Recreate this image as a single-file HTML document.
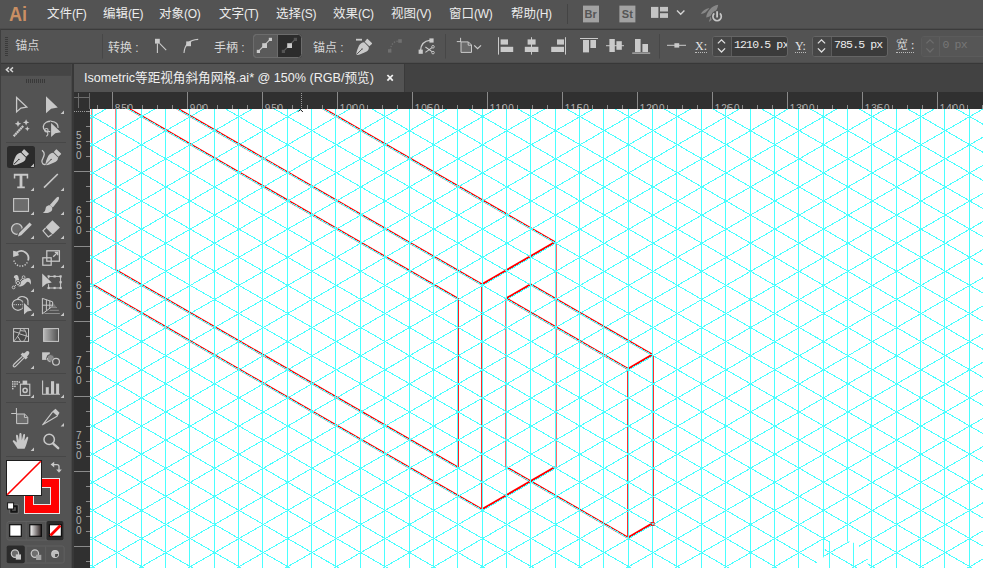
<!DOCTYPE html>
<html lang="zh-CN"><head><meta charset="utf-8"><title>Adobe Illustrator - Isometric等距视角斜角网格.ai</title>
<style>
html,body{margin:0;padding:0;}
body{width:983px;height:568px;overflow:hidden;background:#535353;position:relative;font-family:"Liberation Sans","Noto Sans CJK SC",sans-serif;color:#e6e6e6;}
.abs{position:absolute;}
#menubar{left:0;top:0;width:983px;height:28px;background:#535353;}
#menubar span{position:absolute;top:5px;font-size:12.5px;line-height:18px;color:#ececec;white-space:nowrap;}
#menubar i{font-style:normal;font-size:12px;letter-spacing:-0.3px;}
#ailogo{position:absolute;left:9px;top:0px;font-size:21px;line-height:27px;font-weight:bold;color:#c98f63;transform:scaleX(0.86);transform-origin:0 0;}
#line1{left:0;top:28px;width:983px;height:2px;background:linear-gradient(#4b4b4b 0 50%,#3b3b3b 50% 100%);}
#ctrl{left:1px;top:30px;width:982px;height:32px;background:#535353;}
#ctrl span{position:absolute;font-size:12px;line-height:16px;color:#d6d6d6;white-space:nowrap;}
#line2{left:0;top:62px;width:983px;height:2px;background:linear-gradient(#4d4d4d 0 40%,#383838 40% 100%);}
#leftedge{left:0;top:29px;width:1px;height:539px;background:#3f3f3f;}
#tools{left:1px;top:64px;width:70px;height:504px;background:#535353;}
#toolhead{left:1px;top:64px;width:70px;height:11px;background:#454545;}
#toolheadline{left:1px;top:75px;width:70px;height:1px;background:#474747;}
#gap{left:71px;top:64px;width:3px;height:504px;background:#383838;border-left:1.5px solid #494949;box-sizing:border-box;}
#tabbar{left:74px;top:64px;width:909px;height:28px;background:#424242;}
#tab{left:74px;top:64px;width:330px;height:28px;background:#535353;border-right:1px solid #3a3a3a;}
#tab span{position:absolute;left:10px;top:5px;font-size:12.6px;line-height:18px;color:#f0f0f0;white-space:nowrap;}
#rulert{left:74px;top:92px;width:909px;height:17px;background:#303030;}
#rulerl{left:74px;top:109px;width:16px;height:459px;background:#303030;}
#canvas{left:90px;top:109px;width:893px;height:459px;background:#fff;overflow:hidden;}
svg.cv{position:absolute;left:0;top:0;display:block;}
svg.rul{position:absolute;left:0;top:0;display:block;}
svg.ui{position:absolute;left:0;top:0;display:block;}
.field{position:absolute;top:35.5px;height:21px;box-sizing:border-box;border:1px solid #656565;border-radius:3px;background:#3b3b3b;overflow:hidden;}
.field .sp{position:absolute;left:0;top:0;width:17.5px;height:19px;background:#464646;border-right:1px solid #5c5c5c;}
.field .tx{position:absolute;left:21px;top:0.5px;font-family:"Liberation Mono",monospace;font-size:11.5px;line-height:15px;letter-spacing:-0.85px;color:#ececec;white-space:pre;}
.lbl{font-family:"Liberation Serif","Noto Serif CJK SC",serif;}
</style></head><body>
<div id="menubar" class="abs">
<div id="ailogo">Ai</div>
<span style="left:47px">文件<i>(F)</i></span><span style="left:103px">编辑<i>(E)</i></span><span style="left:159px">对象<i>(O)</i></span><span style="left:219px">文字<i>(T)</i></span><span style="left:276px">选择<i>(S)</i></span><span style="left:333px">效果<i>(C)</i></span><span style="left:391px">视图<i>(V)</i></span><span style="left:449px">窗口<i>(W)</i></span><span style="left:511px">帮助<i>(H)</i></span>
</div>
<div id="line1" class="abs"></div>
<div id="ctrl" class="abs"></div>
<div id="line2" class="abs"></div>
<div id="tools" class="abs"></div>
<div id="toolhead" class="abs"></div>
<div id="toolheadline" class="abs"></div>
<div id="gap" class="abs"></div>
<div id="leftedge" class="abs"></div>
<div id="tabbar" class="abs"></div>
<div id="tab" class="abs"><span>Isometric等距视角斜角网格.ai* @ 150% (RGB/预览)</span></div>
<div id="rulert" class="abs"></div>
<div id="rulerl" class="abs"></div>
<svg class="rul" width="983" height="568" viewBox="0 0 983 568">
<g stroke="#8a8a8a" stroke-width="1" shape-rendering="crispEdges">
<g stroke="#6c6c6c"><line x1="78.5" y1="93" x2="78.5" y2="108"/><line x1="74" y1="97.5" x2="90" y2="97.5"/><line x1="89.5" y1="93" x2="89.5" y2="109"/></g>
<line x1="97.5" y1="105" x2="97.5" y2="109"/>
<line x1="112.5" y1="92" x2="112.5" y2="109"/>
<line x1="127.5" y1="105" x2="127.5" y2="109"/>
<line x1="142.5" y1="105" x2="142.5" y2="109"/>
<line x1="157.5" y1="105" x2="157.5" y2="109"/>
<line x1="172.5" y1="105" x2="172.5" y2="109"/>
<line x1="187.5" y1="92" x2="187.5" y2="109"/>
<line x1="202.5" y1="105" x2="202.5" y2="109"/>
<line x1="217.5" y1="105" x2="217.5" y2="109"/>
<line x1="232.5" y1="105" x2="232.5" y2="109"/>
<line x1="247.5" y1="105" x2="247.5" y2="109"/>
<line x1="262.5" y1="92" x2="262.5" y2="109"/>
<line x1="277.5" y1="105" x2="277.5" y2="109"/>
<line x1="292.5" y1="105" x2="292.5" y2="109"/>
<line x1="307.5" y1="105" x2="307.5" y2="109"/>
<line x1="322.5" y1="105" x2="322.5" y2="109"/>
<line x1="337.5" y1="92" x2="337.5" y2="109"/>
<line x1="352.5" y1="105" x2="352.5" y2="109"/>
<line x1="367.5" y1="105" x2="367.5" y2="109"/>
<line x1="382.5" y1="105" x2="382.5" y2="109"/>
<line x1="397.5" y1="105" x2="397.5" y2="109"/>
<line x1="412.5" y1="92" x2="412.5" y2="109"/>
<line x1="427.5" y1="105" x2="427.5" y2="109"/>
<line x1="442.5" y1="105" x2="442.5" y2="109"/>
<line x1="457.5" y1="105" x2="457.5" y2="109"/>
<line x1="472.5" y1="105" x2="472.5" y2="109"/>
<line x1="487.5" y1="92" x2="487.5" y2="109"/>
<line x1="502.5" y1="105" x2="502.5" y2="109"/>
<line x1="517.5" y1="105" x2="517.5" y2="109"/>
<line x1="532.5" y1="105" x2="532.5" y2="109"/>
<line x1="547.5" y1="105" x2="547.5" y2="109"/>
<line x1="562.5" y1="92" x2="562.5" y2="109"/>
<line x1="577.5" y1="105" x2="577.5" y2="109"/>
<line x1="592.5" y1="105" x2="592.5" y2="109"/>
<line x1="607.5" y1="105" x2="607.5" y2="109"/>
<line x1="622.5" y1="105" x2="622.5" y2="109"/>
<line x1="637.5" y1="92" x2="637.5" y2="109"/>
<line x1="652.5" y1="105" x2="652.5" y2="109"/>
<line x1="667.5" y1="105" x2="667.5" y2="109"/>
<line x1="682.5" y1="105" x2="682.5" y2="109"/>
<line x1="697.5" y1="105" x2="697.5" y2="109"/>
<line x1="712.5" y1="92" x2="712.5" y2="109"/>
<line x1="727.5" y1="105" x2="727.5" y2="109"/>
<line x1="742.5" y1="105" x2="742.5" y2="109"/>
<line x1="757.5" y1="105" x2="757.5" y2="109"/>
<line x1="772.5" y1="105" x2="772.5" y2="109"/>
<line x1="787.5" y1="92" x2="787.5" y2="109"/>
<line x1="802.5" y1="105" x2="802.5" y2="109"/>
<line x1="817.5" y1="105" x2="817.5" y2="109"/>
<line x1="832.5" y1="105" x2="832.5" y2="109"/>
<line x1="847.5" y1="105" x2="847.5" y2="109"/>
<line x1="862.5" y1="92" x2="862.5" y2="109"/>
<line x1="877.5" y1="105" x2="877.5" y2="109"/>
<line x1="892.5" y1="105" x2="892.5" y2="109"/>
<line x1="907.5" y1="105" x2="907.5" y2="109"/>
<line x1="922.5" y1="105" x2="922.5" y2="109"/>
<line x1="937.5" y1="92" x2="937.5" y2="109"/>
<line x1="952.5" y1="105" x2="952.5" y2="109"/>
<line x1="967.5" y1="105" x2="967.5" y2="109"/>
<line x1="982.5" y1="105" x2="982.5" y2="109"/>
<line x1="86" y1="111.5" x2="90" y2="111.5"/>
<line x1="86" y1="126.5" x2="90" y2="126.5"/>
<line x1="86" y1="141.5" x2="90" y2="141.5"/>
<line x1="86" y1="156.5" x2="90" y2="156.5"/>
<line x1="74" y1="171.5" x2="90" y2="171.5"/>
<line x1="86" y1="186.5" x2="90" y2="186.5"/>
<line x1="86" y1="201.5" x2="90" y2="201.5"/>
<line x1="86" y1="216.5" x2="90" y2="216.5"/>
<line x1="86" y1="231.5" x2="90" y2="231.5"/>
<line x1="74" y1="246.5" x2="90" y2="246.5"/>
<line x1="86" y1="261.5" x2="90" y2="261.5"/>
<line x1="86" y1="276.5" x2="90" y2="276.5"/>
<line x1="86" y1="291.5" x2="90" y2="291.5"/>
<line x1="86" y1="306.5" x2="90" y2="306.5"/>
<line x1="74" y1="321.5" x2="90" y2="321.5"/>
<line x1="86" y1="336.5" x2="90" y2="336.5"/>
<line x1="86" y1="351.5" x2="90" y2="351.5"/>
<line x1="86" y1="366.5" x2="90" y2="366.5"/>
<line x1="86" y1="381.5" x2="90" y2="381.5"/>
<line x1="74" y1="396.5" x2="90" y2="396.5"/>
<line x1="86" y1="411.5" x2="90" y2="411.5"/>
<line x1="86" y1="426.5" x2="90" y2="426.5"/>
<line x1="86" y1="441.5" x2="90" y2="441.5"/>
<line x1="86" y1="456.5" x2="90" y2="456.5"/>
<line x1="74" y1="471.5" x2="90" y2="471.5"/>
<line x1="86" y1="486.5" x2="90" y2="486.5"/>
<line x1="86" y1="501.5" x2="90" y2="501.5"/>
<line x1="86" y1="516.5" x2="90" y2="516.5"/>
<line x1="86" y1="531.5" x2="90" y2="531.5"/>
<line x1="74" y1="546.5" x2="90" y2="546.5"/>
<line x1="86" y1="561.5" x2="90" y2="561.5"/>
</g>
<line x1="74" y1="111.5" x2="90" y2="111.5" stroke="#9a9a9a" stroke-width="1" stroke-dasharray="1 1" shape-rendering="crispEdges"/>
<line x1="301.5" y1="93" x2="301.5" y2="109" stroke="#9a9a9a" stroke-width="1" stroke-dasharray="1 1" shape-rendering="crispEdges"/>
<g font-family="Liberation Sans, sans-serif" font-size="10" fill="#b2b2b2">
<text x="114.8" y="112.3" letter-spacing="0.85">850</text>
<text x="189.8" y="112.3" letter-spacing="0.85">900</text>
<text x="264.8" y="112.3" letter-spacing="0.85">950</text>
<text x="339.8" y="112.3" letter-spacing="0.85">1000</text>
<text x="414.8" y="112.3" letter-spacing="0.85">1050</text>
<text x="489.8" y="112.3" letter-spacing="0.85">1100</text>
<text x="564.8" y="112.3" letter-spacing="0.85">1150</text>
<text x="639.8" y="112.3" letter-spacing="0.85">1200</text>
<text x="714.8" y="112.3" letter-spacing="0.85">1250</text>
<text x="789.8" y="112.3" letter-spacing="0.85">1300</text>
<text x="864.8" y="112.3" letter-spacing="0.85">1350</text>
<text x="939.8" y="112.3" letter-spacing="0.85">1400</text>
<text x="76" y="138.7">5</text>
<text x="76" y="148.7">5</text>
<text x="76" y="158.7">0</text>
<text x="76" y="213.7">6</text>
<text x="76" y="223.7">0</text>
<text x="76" y="233.7">0</text>
<text x="76" y="288.7">6</text>
<text x="76" y="298.7">5</text>
<text x="76" y="308.7">0</text>
<text x="76" y="363.7">7</text>
<text x="76" y="373.7">0</text>
<text x="76" y="383.7">0</text>
<text x="76" y="438.7">7</text>
<text x="76" y="448.7">5</text>
<text x="76" y="458.7">0</text>
<text x="76" y="513.7">8</text>
<text x="76" y="523.7">0</text>
<text x="76" y="533.7">0</text>
<text x="76" y="588.7">8</text>
<text x="76" y="598.7">5</text>
<text x="76" y="608.7">0</text>
</g>
</svg>
<div id="canvas" class="abs">
<svg class="cv" width="893" height="459" viewBox="90 109 893 459">
<g stroke="#ff0000" stroke-width="2" fill="none">
<line x1="481.80" y1="284.37" x2="554.88" y2="242.18"/>
<line x1="554.88" y1="467.21" x2="481.80" y2="509.40"/>
<line x1="481.80" y1="284.37" x2="140.76" y2="87.47"/>
<line x1="554.88" y1="242.18" x2="213.84" y2="45.28"/>
<line x1="457.44" y1="298.44" x2="116.40" y2="101.54"/>
<line x1="457.44" y1="467.21" x2="116.40" y2="270.31"/>
<line x1="481.80" y1="509.40" x2="92.04" y2="284.37"/>
<line x1="506.16" y1="298.44" x2="530.52" y2="284.37"/>
<line x1="530.52" y1="284.37" x2="652.32" y2="354.69"/>
<line x1="652.32" y1="354.69" x2="627.96" y2="368.76"/>
<line x1="627.96" y1="368.76" x2="506.16" y2="298.44"/>
<line x1="506.16" y1="467.21" x2="627.96" y2="537.53"/>
<line x1="627.96" y1="537.53" x2="652.32" y2="523.46"/>
</g>
<g stroke-width="1" fill="none" shape-rendering="crispEdges">
<line x1="556.5" y1="242.18" x2="556.5" y2="467.21" stroke="#ff6a6a"/>
<line x1="481.5" y1="509.40" x2="481.5" y2="284.37" stroke="#ff2a2a"/>
<line x1="458.5" y1="298.44" x2="458.5" y2="467.21" stroke="#ff2020"/>
<line x1="115.5" y1="270.31" x2="115.5" y2="73.41" stroke="#ff7a7a"/>
<line x1="91.5" y1="284.37" x2="91.5" y2="73.41" stroke="#ff7a7a"/>
<line x1="505.5" y1="298.44" x2="505.5" y2="467.21" stroke="#ff6a6a"/>
<line x1="627.5" y1="368.76" x2="627.5" y2="537.53" stroke="#ff3030"/>
<line x1="653.5" y1="354.69" x2="653.5" y2="523.46" stroke="#ff3030"/>
</g>
<g stroke="#4affff" stroke-width="1" shape-rendering="crispEdges" fill="none">
<line x1="92.5" y1="109" x2="92.5" y2="568"/>
<line x1="116.5" y1="109" x2="116.5" y2="568"/>
<line x1="141.5" y1="109" x2="141.5" y2="568"/>
<line x1="165.5" y1="109" x2="165.5" y2="568"/>
<line x1="189.5" y1="109" x2="189.5" y2="568"/>
<line x1="214.5" y1="109" x2="214.5" y2="568"/>
<line x1="238.5" y1="109" x2="238.5" y2="568"/>
<line x1="262.5" y1="109" x2="262.5" y2="568"/>
<line x1="287.5" y1="109" x2="287.5" y2="568"/>
<line x1="311.5" y1="109" x2="311.5" y2="568"/>
<line x1="335.5" y1="109" x2="335.5" y2="568"/>
<line x1="360.5" y1="109" x2="360.5" y2="568"/>
<line x1="384.5" y1="109" x2="384.5" y2="568"/>
<line x1="409.5" y1="109" x2="409.5" y2="568"/>
<line x1="433.5" y1="109" x2="433.5" y2="568"/>
<line x1="457.5" y1="109" x2="457.5" y2="568"/>
<line x1="482.5" y1="109" x2="482.5" y2="568"/>
<line x1="506.5" y1="109" x2="506.5" y2="568"/>
<line x1="530.5" y1="109" x2="530.5" y2="568"/>
<line x1="555.5" y1="109" x2="555.5" y2="568"/>
<line x1="579.5" y1="109" x2="579.5" y2="568"/>
<line x1="603.5" y1="109" x2="603.5" y2="568"/>
<line x1="628.5" y1="109" x2="628.5" y2="568"/>
<line x1="652.5" y1="109" x2="652.5" y2="568"/>
<line x1="676.5" y1="109" x2="676.5" y2="568"/>
<line x1="701.5" y1="109" x2="701.5" y2="568"/>
<line x1="725.5" y1="109" x2="725.5" y2="568"/>
<line x1="750.5" y1="109" x2="750.5" y2="568"/>
<line x1="774.5" y1="109" x2="774.5" y2="568"/>
<line x1="798.5" y1="109" x2="798.5" y2="568"/>
<line x1="823.5" y1="109" x2="823.5" y2="568"/>
<line x1="847.5" y1="109" x2="847.5" y2="568"/>
<line x1="871.5" y1="109" x2="871.5" y2="568"/>
<line x1="896.5" y1="109" x2="896.5" y2="568"/>
<line x1="920.5" y1="109" x2="920.5" y2="568"/>
<line x1="944.5" y1="109" x2="944.5" y2="568"/>
<line x1="969.5" y1="109" x2="969.5" y2="568"/>
<line x1="90" y1="-391.353" x2="983" y2="124.221"/>
<line x1="90" y1="-363.224" x2="983" y2="152.350"/>
<line x1="90" y1="-335.096" x2="983" y2="180.478"/>
<line x1="90" y1="-306.967" x2="983" y2="208.607"/>
<line x1="90" y1="-278.839" x2="983" y2="236.735"/>
<line x1="90" y1="-250.710" x2="983" y2="264.864"/>
<line x1="90" y1="-222.582" x2="983" y2="292.992"/>
<line x1="90" y1="-194.453" x2="983" y2="321.121"/>
<line x1="90" y1="-166.325" x2="983" y2="349.249"/>
<line x1="90" y1="-138.196" x2="983" y2="377.378"/>
<line x1="90" y1="-110.068" x2="983" y2="405.506"/>
<line x1="90" y1="-81.939" x2="983" y2="433.635"/>
<line x1="90" y1="-53.811" x2="983" y2="461.763"/>
<line x1="90" y1="-25.682" x2="983" y2="489.892"/>
<line x1="90" y1="2.446" x2="983" y2="518.020"/>
<line x1="90" y1="30.575" x2="983" y2="546.149"/>
<line x1="90" y1="58.703" x2="983" y2="574.277"/>
<line x1="90" y1="86.832" x2="983" y2="602.406"/>
<line x1="90" y1="114.960" x2="983" y2="630.534"/>
<line x1="90" y1="118.240" x2="983" y2="-397.334"/>
<line x1="90" y1="143.089" x2="983" y2="658.663"/>
<line x1="90" y1="146.368" x2="983" y2="-369.206"/>
<line x1="90" y1="171.217" x2="983" y2="686.791"/>
<line x1="90" y1="174.497" x2="983" y2="-341.077"/>
<line x1="90" y1="199.346" x2="983" y2="714.920"/>
<line x1="90" y1="202.625" x2="983" y2="-312.949"/>
<line x1="90" y1="227.474" x2="983" y2="743.048"/>
<line x1="90" y1="230.754" x2="983" y2="-284.820"/>
<line x1="90" y1="255.603" x2="983" y2="771.177"/>
<line x1="90" y1="258.882" x2="983" y2="-256.692"/>
<line x1="90" y1="283.731" x2="983" y2="799.305"/>
<line x1="90" y1="287.011" x2="983" y2="-228.563"/>
<line x1="90" y1="311.860" x2="983" y2="827.434"/>
<line x1="90" y1="315.139" x2="983" y2="-200.435"/>
<line x1="90" y1="339.988" x2="983" y2="855.562"/>
<line x1="90" y1="343.268" x2="983" y2="-172.306"/>
<line x1="90" y1="368.117" x2="983" y2="883.691"/>
<line x1="90" y1="371.396" x2="983" y2="-144.178"/>
<line x1="90" y1="396.245" x2="983" y2="911.819"/>
<line x1="90" y1="399.525" x2="983" y2="-116.049"/>
<line x1="90" y1="424.374" x2="983" y2="939.948"/>
<line x1="90" y1="427.653" x2="983" y2="-87.921"/>
<line x1="90" y1="452.502" x2="983" y2="968.076"/>
<line x1="90" y1="455.782" x2="983" y2="-59.792"/>
<line x1="90" y1="480.631" x2="983" y2="996.205"/>
<line x1="90" y1="483.910" x2="983" y2="-31.664"/>
<line x1="90" y1="508.759" x2="983" y2="1024.333"/>
<line x1="90" y1="512.039" x2="983" y2="-3.535"/>
<line x1="90" y1="536.888" x2="983" y2="1052.462"/>
<line x1="90" y1="540.167" x2="983" y2="24.593"/>
<line x1="90" y1="565.016" x2="983" y2="1080.590"/>
<line x1="90" y1="568.296" x2="983" y2="52.722"/>
<line x1="90" y1="596.424" x2="983" y2="80.850"/>
<line x1="90" y1="624.553" x2="983" y2="108.979"/>
<line x1="90" y1="652.681" x2="983" y2="137.107"/>
<line x1="90" y1="680.810" x2="983" y2="165.236"/>
<line x1="90" y1="708.938" x2="983" y2="193.364"/>
<line x1="90" y1="737.067" x2="983" y2="221.493"/>
<line x1="90" y1="765.195" x2="983" y2="249.622"/>
<line x1="90" y1="793.324" x2="983" y2="277.750"/>
<line x1="90" y1="821.452" x2="983" y2="305.879"/>
<line x1="90" y1="849.581" x2="983" y2="334.007"/>
<line x1="90" y1="877.709" x2="983" y2="362.136"/>
<line x1="90" y1="905.838" x2="983" y2="390.264"/>
<line x1="90" y1="933.966" x2="983" y2="418.393"/>
<line x1="90" y1="962.095" x2="983" y2="446.521"/>
<line x1="90" y1="990.223" x2="983" y2="474.650"/>
<line x1="90" y1="1018.352" x2="983" y2="502.778"/>
<line x1="90" y1="1046.480" x2="983" y2="530.907"/>
<line x1="90" y1="1074.609" x2="983" y2="559.035"/>
</g>
<rect x="651.1" y="522.5" width="3" height="3" fill="none" stroke="#e81818" stroke-width="0.9"/>
<path d="M298.3,111.6 L300.3,109.6 L302.9,111.8" fill="none" stroke="#111" stroke-width="1"/>
<clipPath id="wm"><path d="M825,548 L829,542 L851,541.5 L858,545 L868,558 L867,568 L817,568 L817,562 L824,557Z"/></clipPath>
<g clip-path="url(#wm)"><rect x="810" y="535" width="70" height="40" fill="#fff"/><g transform="translate(-17.9,0)"><g stroke="#4affff" stroke-width="1" shape-rendering="crispEdges" fill="none"><line x1="92.5" y1="109" x2="92.5" y2="568"/><line x1="116.5" y1="109" x2="116.5" y2="568"/><line x1="141.5" y1="109" x2="141.5" y2="568"/><line x1="165.5" y1="109" x2="165.5" y2="568"/><line x1="189.5" y1="109" x2="189.5" y2="568"/><line x1="214.5" y1="109" x2="214.5" y2="568"/><line x1="238.5" y1="109" x2="238.5" y2="568"/><line x1="262.5" y1="109" x2="262.5" y2="568"/><line x1="287.5" y1="109" x2="287.5" y2="568"/><line x1="311.5" y1="109" x2="311.5" y2="568"/><line x1="335.5" y1="109" x2="335.5" y2="568"/><line x1="360.5" y1="109" x2="360.5" y2="568"/><line x1="384.5" y1="109" x2="384.5" y2="568"/><line x1="409.5" y1="109" x2="409.5" y2="568"/><line x1="433.5" y1="109" x2="433.5" y2="568"/><line x1="457.5" y1="109" x2="457.5" y2="568"/><line x1="482.5" y1="109" x2="482.5" y2="568"/><line x1="506.5" y1="109" x2="506.5" y2="568"/><line x1="530.5" y1="109" x2="530.5" y2="568"/><line x1="555.5" y1="109" x2="555.5" y2="568"/><line x1="579.5" y1="109" x2="579.5" y2="568"/><line x1="603.5" y1="109" x2="603.5" y2="568"/><line x1="628.5" y1="109" x2="628.5" y2="568"/><line x1="652.5" y1="109" x2="652.5" y2="568"/><line x1="676.5" y1="109" x2="676.5" y2="568"/><line x1="701.5" y1="109" x2="701.5" y2="568"/><line x1="725.5" y1="109" x2="725.5" y2="568"/><line x1="750.5" y1="109" x2="750.5" y2="568"/><line x1="774.5" y1="109" x2="774.5" y2="568"/><line x1="798.5" y1="109" x2="798.5" y2="568"/><line x1="823.5" y1="109" x2="823.5" y2="568"/><line x1="847.5" y1="109" x2="847.5" y2="568"/><line x1="871.5" y1="109" x2="871.5" y2="568"/><line x1="896.5" y1="109" x2="896.5" y2="568"/><line x1="920.5" y1="109" x2="920.5" y2="568"/><line x1="944.5" y1="109" x2="944.5" y2="568"/><line x1="969.5" y1="109" x2="969.5" y2="568"/><line x1="90" y1="-391.353" x2="983" y2="124.221"/><line x1="90" y1="-363.224" x2="983" y2="152.350"/><line x1="90" y1="-335.096" x2="983" y2="180.478"/><line x1="90" y1="-306.967" x2="983" y2="208.607"/><line x1="90" y1="-278.839" x2="983" y2="236.735"/><line x1="90" y1="-250.710" x2="983" y2="264.864"/><line x1="90" y1="-222.582" x2="983" y2="292.992"/><line x1="90" y1="-194.453" x2="983" y2="321.121"/><line x1="90" y1="-166.325" x2="983" y2="349.249"/><line x1="90" y1="-138.196" x2="983" y2="377.378"/><line x1="90" y1="-110.068" x2="983" y2="405.506"/><line x1="90" y1="-81.939" x2="983" y2="433.635"/><line x1="90" y1="-53.811" x2="983" y2="461.763"/><line x1="90" y1="-25.682" x2="983" y2="489.892"/><line x1="90" y1="2.446" x2="983" y2="518.020"/><line x1="90" y1="30.575" x2="983" y2="546.149"/><line x1="90" y1="58.703" x2="983" y2="574.277"/><line x1="90" y1="86.832" x2="983" y2="602.406"/><line x1="90" y1="114.960" x2="983" y2="630.534"/><line x1="90" y1="118.240" x2="983" y2="-397.334"/><line x1="90" y1="143.089" x2="983" y2="658.663"/><line x1="90" y1="146.368" x2="983" y2="-369.206"/><line x1="90" y1="171.217" x2="983" y2="686.791"/><line x1="90" y1="174.497" x2="983" y2="-341.077"/><line x1="90" y1="199.346" x2="983" y2="714.920"/><line x1="90" y1="202.625" x2="983" y2="-312.949"/><line x1="90" y1="227.474" x2="983" y2="743.048"/><line x1="90" y1="230.754" x2="983" y2="-284.820"/><line x1="90" y1="255.603" x2="983" y2="771.177"/><line x1="90" y1="258.882" x2="983" y2="-256.692"/><line x1="90" y1="283.731" x2="983" y2="799.305"/><line x1="90" y1="287.011" x2="983" y2="-228.563"/><line x1="90" y1="311.860" x2="983" y2="827.434"/><line x1="90" y1="315.139" x2="983" y2="-200.435"/><line x1="90" y1="339.988" x2="983" y2="855.562"/><line x1="90" y1="343.268" x2="983" y2="-172.306"/><line x1="90" y1="368.117" x2="983" y2="883.691"/><line x1="90" y1="371.396" x2="983" y2="-144.178"/><line x1="90" y1="396.245" x2="983" y2="911.819"/><line x1="90" y1="399.525" x2="983" y2="-116.049"/><line x1="90" y1="424.374" x2="983" y2="939.948"/><line x1="90" y1="427.653" x2="983" y2="-87.921"/><line x1="90" y1="452.502" x2="983" y2="968.076"/><line x1="90" y1="455.782" x2="983" y2="-59.792"/><line x1="90" y1="480.631" x2="983" y2="996.205"/><line x1="90" y1="483.910" x2="983" y2="-31.664"/><line x1="90" y1="508.759" x2="983" y2="1024.333"/><line x1="90" y1="512.039" x2="983" y2="-3.535"/><line x1="90" y1="536.888" x2="983" y2="1052.462"/><line x1="90" y1="540.167" x2="983" y2="24.593"/><line x1="90" y1="565.016" x2="983" y2="1080.590"/><line x1="90" y1="568.296" x2="983" y2="52.722"/><line x1="90" y1="596.424" x2="983" y2="80.850"/><line x1="90" y1="624.553" x2="983" y2="108.979"/><line x1="90" y1="652.681" x2="983" y2="137.107"/><line x1="90" y1="680.810" x2="983" y2="165.236"/><line x1="90" y1="708.938" x2="983" y2="193.364"/><line x1="90" y1="737.067" x2="983" y2="221.493"/><line x1="90" y1="765.195" x2="983" y2="249.622"/><line x1="90" y1="793.324" x2="983" y2="277.750"/><line x1="90" y1="821.452" x2="983" y2="305.879"/><line x1="90" y1="849.581" x2="983" y2="334.007"/><line x1="90" y1="877.709" x2="983" y2="362.136"/><line x1="90" y1="905.838" x2="983" y2="390.264"/><line x1="90" y1="933.966" x2="983" y2="418.393"/><line x1="90" y1="962.095" x2="983" y2="446.521"/><line x1="90" y1="990.223" x2="983" y2="474.650"/><line x1="90" y1="1018.352" x2="983" y2="502.778"/><line x1="90" y1="1046.480" x2="983" y2="530.907"/><line x1="90" y1="1074.609" x2="983" y2="559.035"/></g></g></g>
</svg>
</div>
<div class="abs" id="ctrlspans" style="left:0;top:0;width:0;height:0">
<span class="abs" style="left:15.3px;top:38px;font-size:12px;line-height:16px;color:#d6d6d6;white-space:nowrap">锚点</span>
<span class="abs" style="left:108px;top:39.5px;font-size:12px;line-height:16px;color:#d6d6d6;white-space:nowrap">转换&nbsp;:</span>
<span class="abs" style="left:214px;top:39.5px;font-size:12px;line-height:16px;color:#d6d6d6;white-space:nowrap">手柄&nbsp;:</span>
<span class="abs" style="left:313px;top:39.5px;font-size:12px;line-height:16px;color:#d6d6d6;white-space:nowrap">锚点&nbsp;:</span>
<span class="abs lbl" style="left:695px;top:38px;font-size:12px;line-height:16px;color:#e4e4e4;white-space:nowrap;border-bottom:1px dotted #bbb;height:14px">X:</span>
<span class="abs lbl" style="left:795px;top:38px;font-size:12px;line-height:16px;color:#e4e4e4;white-space:nowrap;border-bottom:1px dotted #bbb;height:14px">Y:</span>
<span class="abs lbl" style="left:896px;top:37px;font-size:12px;line-height:16px;color:#e4e4e4;white-space:nowrap;border-bottom:1px dotted #bbb;height:15px">宽 :</span>
<div class="field" style="left:712px;width:76px"><div class="sp"></div><div class="tx">1210.5 px</div></div>
<div class="field" style="left:812px;width:76px"><div class="sp"></div><div class="tx">785.5 px</div></div>
<div class="field" style="left:920.5px;width:70px;border-color:#5b5b5b;background:#565656"><div class="sp" style="background:#565656;border-color:#5e5e5e"></div><div class="tx" style="color:#767676">0 px</div></div>
</div>
<svg class="ui" width="983" height="568" viewBox="0 0 983 568"><defs><linearGradient id="gr1" x1="0" y1="0" x2="1" y2="0"><stop offset="0" stop-color="#b8b8b8"/><stop offset="1" stop-color="#505050"/></linearGradient><linearGradient id="gr2" x1="0" y1="0" x2="1" y2="0"><stop offset="0" stop-color="#ffffff"/><stop offset="1" stop-color="#2a2020"/></linearGradient></defs><path d="M9,67.4 L6.4,69.7 L9,72 M13,67.4 L10.4,69.7 L13,72" fill="none" stroke="#d4d4d4" stroke-width="1.5"/>
<g fill="#393939"><rect x="26" y="79" width="1" height="4"/><rect x="28" y="79" width="1" height="4"/><rect x="30" y="79" width="1" height="4"/><rect x="32" y="79" width="1" height="4"/><rect x="34" y="79" width="1" height="4"/><rect x="36" y="79" width="1" height="4"/><rect x="38" y="79" width="1" height="4"/><rect x="40" y="79" width="1" height="4"/><rect x="42" y="79" width="1" height="4"/><rect x="44" y="79" width="1" height="4"/></g>
<line x1="6" y1="142.5" x2="66" y2="142.5" stroke="#474747" stroke-width="1"/>
<line x1="6" y1="243.5" x2="66" y2="243.5" stroke="#474747" stroke-width="1"/>
<line x1="6" y1="320.5" x2="66" y2="320.5" stroke="#474747" stroke-width="1"/>
<line x1="6" y1="373.5" x2="66" y2="373.5" stroke="#474747" stroke-width="1"/>
<line x1="6" y1="402.5" x2="66" y2="402.5" stroke="#474747" stroke-width="1"/>
<line x1="6" y1="456.5" x2="66" y2="456.5" stroke="#474747" stroke-width="1"/>
<path d="M16.6,97.5 L26.8,107.1 L20.9,108 L16.6,111.9Z" fill="none" stroke="#c8c8c8" stroke-width="1.3" stroke-linejoin="miter"/>
<path d="M46,96.3 L57.8,107.5 L51.1,108.7 L46,113.2Z" fill="#c8c8c8"/>
<path d="M64,110.6 V114 H60.6Z" fill="#c8c8c8"/>
<line x1="13.7" y1="136.3" x2="23.2" y2="126" stroke="#c8c8c8" stroke-width="2.3" stroke-dasharray="2 0.4"/>
<path d="M18,120.6 L18.96,122.84 L21.2,123.8 L18.96,124.75999999999999 L18,127.0 L17.04,124.75999999999999 L14.8,123.8 L17.04,122.84Z M26.1,119.2 L27.060000000000002,121.44000000000001 L29.3,122.4 L27.060000000000002,123.36 L26.1,125.60000000000001 L25.14,123.36 L22.900000000000002,122.4 L25.14,121.44000000000001Z M27.3,126.30000000000001 L28.05,128.05 L29.8,128.8 L28.05,129.55 L27.3,131.3 L26.55,129.55 L24.8,128.8 L26.55,128.05Z" fill="#c8c8c8"/>
<path d="M51,131.5 C46,132.5 43,129.5 43.3,126.5 C43.8,122.5 48,121 51.5,121.3 C56,121.6 58.6,124.5 58,128" fill="none" stroke="#c8c8c8" stroke-width="1.3"/>
<circle cx="46.4" cy="130.2" r="1.7" fill="none" stroke="#c8c8c8" stroke-width="1.1"/>
<path d="M47.2,131.8 C48.4,133.5 48,135.5 46.2,136.3" fill="none" stroke="#c8c8c8" stroke-width="1.1"/>
<path d="M51.1,123 L60.9,132.2 L55.3,133.3 L51.1,137.0Z" fill="#535353" stroke="#535353" stroke-width="1.8"/><path d="M51.1,123 L60.9,132.2 L55.3,133.3 L51.1,137.0Z" fill="#c8c8c8"/>
<rect x="7" y="146" width="28" height="22" rx="2.5" fill="#2b2b2b"/>
<g transform="translate(0,0)"><path d="M13.1,164.7 C13.2,162.4 14.4,159 15.9,156 C16.9,154 18.8,152.9 20.9,152.7 L25.5,157.3 C26,159 25.2,160.6 23.4,161.8 C20.8,163.4 17,164.6 14.4,165.3 Z" fill="#c8c8c8"/><path d="M13.9,164.3 L18.7,159.6" stroke="#2b2b2b" stroke-width="1" fill="none"/><circle cx="18.9" cy="159.4" r="0.7" fill="#2b2b2b"/><path d="M21.5,152.1 L23.7,149.4 Q24.1,149 24.5,149.4 L28.7,153.5 Q29,153.9 28.7,154.3 L26.1,156.7 Z" fill="#c8c8c8"/></g>
<path d="M34,163.6 V167 H30.6Z" fill="#c8c8c8"/>
<g transform="translate(32.3,0)"><path d="M13.1,164.7 C13.2,162.4 14.4,159 15.9,156 C16.9,154 18.8,152.9 20.9,152.7 L25.5,157.3 C26,159 25.2,160.6 23.4,161.8 C20.8,163.4 17,164.6 14.4,165.3 Z" fill="#c8c8c8"/><path d="M13.9,164.3 L18.7,159.6" stroke="#535353" stroke-width="1" fill="none"/><circle cx="18.9" cy="159.4" r="0.7" fill="#535353"/><path d="M21.5,152.1 L23.7,149.4 Q24.1,149 24.5,149.4 L28.7,153.5 Q29,153.9 28.7,154.3 L26.1,156.7 Z" fill="#c8c8c8"/></g>
<path d="M42,150.2 C46.5,153.5 43,157.5 42,160.5 C41.3,163.3 43.6,164.8 45.6,164.4" fill="none" stroke="#c8c8c8" stroke-width="1.3"/>
<path d="M13.8,173.8 H28.2 V178.4 H26.7 V175.8 H22.4 V186.6 H24.8 V188.2 H17.2 V186.6 H19.6 V175.8 H15.3 V178.4 H13.8Z" fill="#c8c8c8"/>
<path d="M34,187.6 V191 H30.6Z" fill="#c8c8c8"/>
<line x1="44" y1="187.6" x2="57.8" y2="174" stroke="#c8c8c8" stroke-width="1.6"/>
<path d="M64,187.6 V191 H60.6Z" fill="#c8c8c8"/>
<rect x="13.6" y="198.6" width="14.9" height="12.8" fill="#6c6c6c" stroke="#c8c8c8" stroke-width="1.1"/>
<path d="M34,211.6 V215 H30.6Z" fill="#c8c8c8"/>
<path d="M58.7,197 Q59.8,198.4 57.6,201.4 L52.8,207.6 L49.8,205 L55.2,199 Q57.7,196.3 58.7,197Z" fill="#c8c8c8"/>
<path d="M48.2,205.4 C50.2,204.6 52.8,206.8 52.2,209.4 C51.4,212.6 47,213.2 42.8,212.9 C44.8,211.7 45.4,210.4 45.6,208.6 C45.8,206.8 46.6,205.9 48.2,205.4Z" fill="#c8c8c8"/>
<path d="M64,211.6 V215 H60.6Z" fill="#c8c8c8"/>
<circle cx="16.9" cy="229" r="5.4" fill="#696969" stroke="#c8c8c8" stroke-width="1.3"/>
<path d="M29.57,222.57 L31.83,224.83 L21.33,235.33 L17.9,236.5 L19.07,233.07Z" fill="#535353" stroke="#535353" stroke-width="2"/>
<path d="M29.57,222.57 L31.83,224.83 L21.33,235.33 L17.9,236.5 L19.07,233.07Z" fill="#c8c8c8"/>
<path d="M34,235.6 V239 H30.6Z" fill="#c8c8c8"/>
<path d="M52.4,220.2 L59.9,227.5 L52.7,234.5 L45.5,227.2Z" fill="#c8c8c8"/>
<path d="M45.6,228 L43,230.8 L48.3,237 L51.8,234.4" fill="none" stroke="#c8c8c8" stroke-width="1.2"/>
<path d="M64,235.6 V239 H60.6Z" fill="#c8c8c8"/>
<path d="M17.2,252.3 A7.2,7.2 0 0 1 28.1,260.4" fill="none" stroke="#c8c8c8" stroke-width="1.8"/>
<path d="M27.3,262.3 A7.2,7.2 0 0 1 13.9,260.4" fill="none" stroke="#c8c8c8" stroke-width="1.4" stroke-dasharray="1.3 1.35"/>
<path d="M13.1,250.8 L17.6,251.8 L18.9,255.2 L13.1,257Z" fill="#c8c8c8"/>
<path d="M34,264.6 V268 H30.6Z" fill="#c8c8c8"/>
<rect x="42.8" y="257.8" width="8.4" height="7.4" fill="none" stroke="#c8c8c8" stroke-width="1.25"/>
<rect x="46.8" y="250.8" width="12.6" height="10.4" fill="none" stroke="#c8c8c8" stroke-width="1.25"/>
<path d="M53.2,256.8 L57.4,252.6" stroke="#c8c8c8" stroke-width="1.3"/><path d="M54.8,252.3 H57.7 V255.2" fill="none" stroke="#c8c8c8" stroke-width="1.3"/>
<path d="M64,264.6 V268 H60.6Z" fill="#c8c8c8"/>
<path d="M13.8,277.4 C14.2,274.6 17.8,274.2 18.4,277 C18.8,279.4 19,280.4 20.6,280.6 C23,280.4 25,278 28,278 C30.8,278 31.4,281.6 30.8,284.8 C29.8,282.8 29,281.8 27.6,281.8 C25.8,282.2 24.8,285.8 20.6,286.4 C17,286.8 14.4,284.6 15,281.6 C15.6,279.6 15.8,278 13.8,277.4Z" fill="#c8c8c8"/>
<path d="M13.6,287.4 L23.6,277.2" stroke="#535353" stroke-width="2.4"/>
<path d="M13.6,287.4 L23.6,277.2" stroke="#c8c8c8" stroke-width="1"/>
<circle cx="13.6" cy="287.4" r="1.4" fill="#535353" stroke="#c8c8c8" stroke-width="0.9"/><circle cx="23.6" cy="277.2" r="1.4" fill="#535353" stroke="#c8c8c8" stroke-width="0.9"/><circle cx="18" cy="283" r="2.7" fill="#535353"/><circle cx="18" cy="283" r="1.6" fill="#535353" stroke="#c8c8c8" stroke-width="0.9"/>
<path d="M34,288.6 V292 H30.6Z" fill="#c8c8c8"/>
<rect x="48.6" y="276.4" width="12" height="11.6" fill="none" stroke="#c8c8c8" stroke-width="1"/>
<g fill="#c8c8c8"><rect x="47.5" y="275.29999999999995" width="2.2" height="2.2"/><rect x="53.5" y="275.29999999999995" width="2.2" height="2.2"/><rect x="59.5" y="275.29999999999995" width="2.2" height="2.2"/><rect x="59.5" y="281.09999999999997" width="2.2" height="2.2"/><rect x="59.5" y="286.9" width="2.2" height="2.2"/><rect x="53.5" y="286.9" width="2.2" height="2.2"/><rect x="47.5" y="286.9" width="2.2" height="2.2"/></g>
<path d="M42.2,273.6 L51.8,282.6 L46.3,283.7 L42.2,287.3Z" fill="#535353" stroke="#535353" stroke-width="1.8"/><path d="M42.2,273.6 L51.8,282.6 L46.3,283.7 L42.2,287.3Z" fill="#c8c8c8"/>
<ellipse cx="18" cy="304.8" rx="5.7" ry="5.5" fill="none" stroke="#c8c8c8" stroke-width="1.2"/>
<path d="M17.4,299.4 A5.6,5.2 0 0 1 27.9,302.6 Q28.2,304 27.8,305.4" fill="none" stroke="#c8c8c8" stroke-width="1.2"/>
<path d="M20.6,300.4 A5,5 0 0 1 21,309" fill="none" stroke="#808080" stroke-width="0.9"/>
<line x1="13.6" y1="304.6" x2="23.4" y2="304.6" stroke="#c8c8c8" stroke-width="1.1" stroke-dasharray="1 1.2"/>
<path d="M24,303 L32.0,310.5 L27.4,311.4 L24,314.4Z" fill="#535353" stroke="#535353" stroke-width="1.8"/><path d="M24,303 L32.0,310.5 L27.4,311.4 L24,314.4Z" fill="#c8c8c8"/>
<path d="M34,312.6 V316 H30.6Z" fill="#c8c8c8"/>
<path d="M42.4,298.2 V314 M42.4,298.4 L52.6,301.8 V306.2 L42.4,313.8 M46.4,299.8 V310.6 M49.8,300.8 V308.2 M42.4,305.2 H52.6" fill="none" stroke="#c8c8c8" stroke-width="1"/>
<path d="M52,307.6 H57 M49.6,310.3 H58.8 M44.6,313.5 H59.8" stroke="#8e8e8e" stroke-width="1" fill="none"/>
<path d="M53,302.6 L56.4,307 H53Z" fill="#777"/>
<path d="M64,312.6 V316 H60.6Z" fill="#c8c8c8"/>
<rect x="13.6" y="328.6" width="14.9" height="12.8" fill="#474747" stroke="#c8c8c8" stroke-width="1"/>
<path d="M13.8,341 C17,338 20,333.5 20.6,328.8 M23.4,328.8 C27.6,332.5 27,337.5 23.6,341.2 M19.6,333.2 L13.8,331.6 M19.4,333.8 L28.4,336.6 M18,336.6 L20.6,341.2 M20.4,330.6 L25.6,331.2" fill="none" stroke="#c8c8c8" stroke-width="0.9"/>
<rect x="43.6" y="328.6" width="14.9" height="12.8" fill="url(#gr1)" stroke="#c8c8c8" stroke-width="1"/>
<path d="M25.2,352.4 Q27.4,350.2 28.8,351.6 Q30.2,353.2 28,355.4 L27,356.4 L27.8,357.4 L25.6,359.6 L20.6,354.6 L22.8,352.4 L23.8,353.4Z" fill="#c8c8c8"/>
<path d="M22.4,356.4 L14.2,364 Q12.6,365.8 13.4,366.6 Q14.4,367.4 16,365.8 L24,357.8" fill="none" stroke="#c8c8c8" stroke-width="1.2"/>
<path d="M34,365.6 V369 H30.6Z" fill="#c8c8c8"/>
<rect x="42.1" y="352.3" width="7.7" height="7.6" fill="#c8c8c8"/>
<circle cx="50.6" cy="358.4" r="3.9" fill="#8a8a8a" stroke="#535353" stroke-width="1"/><path d="M47.4,358 A3.4,3.4 0 0 0 50.4,361.8" fill="none" stroke="#c8c8c8" stroke-width="0.9"/>
<circle cx="56" cy="361.7" r="4.4" fill="#535353"/><circle cx="56" cy="361.7" r="3.4" fill="#535353" stroke="#c8c8c8" stroke-width="1.2"/>
<rect x="20.4" y="384.2" width="9.4" height="11.2" fill="none" stroke="#c8c8c8" stroke-width="1.1"/>
<rect x="22.6" y="380.6" width="4.6" height="3.6" fill="#c8c8c8"/>
<circle cx="25.1" cy="390.3" r="2.1" fill="none" stroke="#c8c8c8" stroke-width="1.5"/>
<g fill="#c8c8c8"><rect x="12" y="381" width="1.5" height="1.5"/><rect x="14.2" y="381" width="1.5" height="1.5"/><rect x="16.4" y="381" width="1.5" height="1.5"/><rect x="18.6" y="381.4" width="1.5" height="1.5"/><rect x="12" y="383.3" width="1.5" height="1.5"/><rect x="14.2" y="383.3" width="1.5" height="1.5"/><rect x="16.4" y="383.3" width="1.5" height="1.5"/><rect x="12" y="385.6" width="1.5" height="1.5"/><rect x="14.2" y="385.6" width="1.5" height="1.5"/><rect x="12" y="387.9" width="1.5" height="1.5"/></g>
<path d="M34,394.6 V398 H30.6Z" fill="#c8c8c8"/>
<path d="M42.6,380.4 V394.3 H60" fill="none" stroke="#c8c8c8" stroke-width="1.1"/>
<rect x="45.8" y="387.2" width="3" height="6.8" fill="#c8c8c8"/><rect x="51" y="381.2" width="3.1" height="12.8" fill="#c8c8c8"/><rect x="56.1" y="383.6" width="3" height="10.4" fill="#c8c8c8"/>
<path d="M64,394.6 V398 H60.6Z" fill="#c8c8c8"/>
<path d="M16.4,408 V414 M11.2,413.5 H16.6" stroke="#c8c8c8" stroke-width="1" fill="none"/>
<path d="M16.6,414 H24.6 L27.8,417.2 V423.6 H16.6Z M24.4,414.2 V417.4 H27.6" fill="#6c6c6c" stroke="#c8c8c8" stroke-width="1"/>
<path d="M52.6,411.8 L42.6,424.8 L57.4,416" fill="none" stroke="#c8c8c8" stroke-width="1.1" stroke-linejoin="round"/>
<path d="M52.2,411.4 L55.5,408.8 L59.5,412.8 L57.6,416.2Z" fill="#c8c8c8"/>
<path d="M64,423.1 V426.5 H60.6Z" fill="#c8c8c8"/>
<path d="M17.6,448.8 C16,446.4 14.4,443.6 12.8,441.6 C12.4,440.6 13.4,439.8 14.4,440.4 L16.8,442.6 L16,436 C15.9,434.6 17.7,434.4 18,435.8 L19,440.4 L19.4,434 C19.5,432.5 21.4,432.5 21.5,434 L21.8,440.2 L23.2,434.8 C23.6,433.5 25.3,433.9 25.1,435.3 L24.4,440.8 L26.4,437.4 C27.1,436.3 28.6,437 28.2,438.3 C27.2,441.6 26.6,445 24.6,448.8Z" fill="#c8c8c8"/>
<path d="M34,447.6 V451 H30.6Z" fill="#c8c8c8"/>
<circle cx="49.2" cy="439.4" r="5.2" fill="none" stroke="#c8c8c8" stroke-width="1.5"/>
<line x1="53.2" y1="443.6" x2="58.2" y2="448.2" stroke="#c8c8c8" stroke-width="2.4" stroke-linecap="round"/>
<rect x="24.5" y="478.5" width="35" height="35" fill="#ff0000" stroke="#e8e8e8" stroke-width="1"/>
<rect x="33.5" y="487.5" width="17" height="17" fill="#535353" stroke="#e8e8e8" stroke-width="1"/>
<rect x="6.5" y="460.5" width="35" height="35" fill="#ffffff" stroke="#1e1e1e" stroke-width="1"/>
<line x1="7.2" y1="494.8" x2="40.8" y2="461.2" stroke="#ff0000" stroke-width="1.6"/>
<path d="M53.6,464.6 H57 Q59,464.6 59,466.6 V470" fill="none" stroke="#c8c8c8" stroke-width="1.3"/>
<path d="M50.6,464.6 L54.2,461.8 V467.4Z M59,472.8 L56.2,469.4 H61.8Z" fill="#c8c8c8"/>
<rect x="10" y="505" width="8" height="8" fill="none" stroke="#8e8e8e" stroke-width="0.7"/><rect x="11.2" y="506.2" width="5.6" height="5.6" fill="#535353" stroke="#141414" stroke-width="1.9"/>
<rect x="7.6" y="502.8" width="6" height="6.2" fill="#fff" stroke="#141414" stroke-width="1"/>
<rect x="7" y="521.5" width="56.4" height="18.6" rx="2" fill="#535353" stroke="#606060" stroke-width="1"/>
<rect x="46.3" y="521" width="17.2" height="19.2" rx="2" fill="#2b2b2b"/>
<line x1="26.2" y1="522" x2="26.2" y2="540" stroke="#5e5e5e"/><line x1="45.8" y1="522" x2="45.8" y2="540" stroke="#5e5e5e"/>
<rect x="9.7" y="524.7" width="11.6" height="11.6" fill="#fff" stroke="#0e0e0e" stroke-width="1.2"/>
<rect x="29.8" y="524.7" width="11.6" height="11.6" fill="url(#gr2)" stroke="#0e0e0e" stroke-width="1.2"/>
<rect x="49.4" y="524.7" width="12" height="11.6" fill="#fff" stroke="#0e0e0e" stroke-width="1.2"/><line x1="50.4" y1="535.4" x2="60.4" y2="525.6" stroke="#f00" stroke-width="2.8"/>
<rect x="7" y="546" width="57.2" height="17" rx="2" fill="#535353" stroke="#606060" stroke-width="1"/>
<rect x="6.6" y="545.6" width="18.2" height="17.6" rx="2" fill="#2b2b2b"/>
<line x1="26" y1="546.5" x2="26" y2="562.5" stroke="#5e5e5e"/><line x1="45.6" y1="546.5" x2="45.6" y2="562.5" stroke="#5e5e5e"/>
<circle cx="15" cy="553.6" r="3.7" fill="#6a6a6a" stroke="#c8c8c8" stroke-width="1.2"/><rect x="15.8" y="554.4" width="5.2" height="5.2" fill="#c8c8c8"/>
<circle cx="34.9" cy="553.6" r="3.7" fill="#6e6e6e" stroke="#c8c8c8" stroke-width="1.2"/><rect x="36.1" y="554.8" width="5.2" height="5.2" fill="#a2a2a2"/>
<circle cx="55.1" cy="554" r="3.4" fill="#bdbdbd" stroke="#c8c8c8" stroke-width="1.1"/><path d="M55.1,554 H58.2 A3.1,3.1 0 0 1 55.1,557.1Z" fill="#4a4a4a"/><g fill="#3a3a3a"><rect x="5" y="37" width="3" height="1"/><rect x="5" y="39" width="3" height="1"/><rect x="5" y="41" width="3" height="1"/><rect x="5" y="43" width="3" height="1"/><rect x="5" y="45" width="3" height="1"/><rect x="5" y="47" width="3" height="1"/><rect x="5" y="49" width="3" height="1"/><rect x="5" y="51" width="3" height="1"/><rect x="5" y="53" width="3" height="1"/><rect x="5" y="55" width="3" height="1"/></g>
<line x1="102.5" y1="34" x2="102.5" y2="58.5" stroke="#474747"/>
<line x1="445.5" y1="34" x2="445.5" y2="58.5" stroke="#474747"/>
<line x1="659.5" y1="34" x2="659.5" y2="58.5" stroke="#474747"/>
<rect x="155" y="38.8" width="4.8" height="4.8" fill="#cacaca"/><path d="M157.4,43.4 V53 M159.6,43.4 L166.2,50.2" stroke="#cacaca" stroke-width="1.1" fill="none"/>
<path d="M184,53 C184.6,45 188,40 198.2,39.4" stroke="#cacaca" stroke-width="1.1" fill="none"/><rect x="186.2" y="41.4" width="4.8" height="4.8" fill="#cacaca"/>
<rect x="253.5" y="34.5" width="48" height="23" rx="3" fill="#5a5a5a" stroke="#6c6c6c"/>
<path d="M277.5,34 H298.5 Q302,34 302,37.5 V54.5 Q302,58 298.5,58 H277.5Z" fill="#2c2c2c"/>
<line x1="277.5" y1="35" x2="277.5" y2="57" stroke="#6c6c6c"/><rect x="253.5" y="34.5" width="48" height="23" rx="3" fill="none" stroke="#6c6c6c"/>
<path d="M258.4,51.4 L270.2,39.4" stroke="#cacaca" stroke-width="1.1"/><rect x="256.8" y="49.8" width="3.2" height="3.2" fill="#cacaca"/><rect x="268.8" y="37.8" width="3.2" height="3.2" fill="#cacaca"/><rect x="262.2" y="43.2" width="4.8" height="4.8" fill="#cacaca"/>
<path d="M283.4,51.4 L295.2,39.4" stroke="#5e5e5e" stroke-width="1.1"/><rect x="281.8" y="49.8" width="3.2" height="3.2" fill="#555"/><rect x="293.8" y="37.8" width="3.2" height="3.2" fill="#555"/><rect x="287.2" y="43.2" width="4.8" height="4.8" fill="#cacaca"/>
<g transform="translate(343.2,-110.4)"><path d="M13.1,164.7 C13.2,162.4 14.4,159 15.9,156 C16.9,154 18.8,152.9 20.9,152.7 L25.5,157.3 C26,159 25.2,160.6 23.4,161.8 C20.8,163.4 17,164.6 14.4,165.3 Z" fill="#cacaca"/><path d="M13.9,164.3 L18.7,159.6" stroke="#535353" stroke-width="1" fill="none"/><circle cx="18.9" cy="159.4" r="0.7" fill="#535353"/><path d="M21.5,152.1 L23.7,149.4 Q24.1,149 24.5,149.4 L28.7,153.5 Q29,153.9 28.7,154.3 L26.1,156.7 Z" fill="#cacaca"/></g>
<line x1="356" y1="39.7" x2="362" y2="39.7" stroke="#cacaca" stroke-width="1.8"/>
<path d="M390.4,50 C390.8,44.4 394,41.2 399,41" stroke="#6e6e6e" stroke-width="1.3" stroke-dasharray="1.4 1.4" fill="none"/><rect x="388" y="49.2" width="3.4" height="3.4" fill="#707070"/><rect x="398.2" y="39.2" width="3.6" height="3.6" fill="#707070"/>
<path d="M420.6,50.4 C421,44 425,40.8 430,40.4" stroke="#cacaca" stroke-width="1.3" fill="none"/><rect x="418.6" y="49.6" width="4.2" height="4.2" fill="#cacaca"/><rect x="429.4" y="38.4" width="4.2" height="4.2" fill="#cacaca"/>
<path d="M425.4,47 L432,51.6 M425.4,52.4 L432,47.6" stroke="#cacaca" stroke-width="1.1" fill="none"/><circle cx="433" cy="46.8" r="1.3" fill="none" stroke="#cacaca" stroke-width="0.9"/><circle cx="433" cy="52.6" r="1.3" fill="none" stroke="#cacaca" stroke-width="0.9"/>
<path d="M460.6,37.8 V42 M456.8,41.6 H461" stroke="#cacaca" stroke-width="1" fill="none"/><path d="M461,41.9 H468.4 L471.5,45 V52.4 H461Z M468.2,42 V45.2 H471.4" fill="#6a6a6a" stroke="#cacaca" stroke-width="1"/>
<path d="M474.2,45.4 L477.6,48.6 L481,45.4" fill="none" stroke="#cacaca" stroke-width="1.3"/>
<g fill="#cacaca" stroke="none">
<rect x="498" y="37.2" width="1" height="17.4"/><rect x="500.6" y="39.4" width="7.4" height="5.2"/><rect x="500.6" y="46.8" width="12.6" height="5.2"/>
<rect x="531" y="37.2" width="1" height="17.4"/><rect x="527.6" y="39.4" width="8" height="5.2"/><rect x="524.8" y="46.8" width="13.6" height="5.2"/>
<rect x="565" y="37.2" width="1" height="17.4"/><rect x="557" y="39.4" width="7" height="5.2"/><rect x="551.2" y="46.8" width="12.8" height="5.2"/>
<rect x="580" y="38" width="18" height="1"/><rect x="583" y="40" width="6" height="12.4"/><rect x="590.4" y="40" width="5.6" height="8"/>
<rect x="606" y="45.2" width="18" height="1"/><rect x="609.4" y="39" width="5.4" height="13"/><rect x="616.4" y="41.2" width="5.4" height="8.6"/>
<rect x="632.2" y="52.6" width="18" height="1"/><rect x="635" y="39" width="5.6" height="13"/><rect x="642.4" y="44" width="5.6" height="8"/>
<rect x="667" y="44.8" width="19" height="1"/><rect x="674.4" y="43.2" width="4.8" height="4.4"/>
</g>
<path d="M717.9,43.4 L721.5,39.8 L725.1,43.4 M717.9,48.4 L721.5,52 L725.1,48.4" fill="none" stroke="#e0e0e0" stroke-width="1.3"/>
<path d="M817.9,43.4 L821.5,39.8 L825.1,43.4 M817.9,48.4 L821.5,52 L825.1,48.4" fill="none" stroke="#e0e0e0" stroke-width="1.3"/>
<path d="M926.4,43.4 L930,39.8 L933.6,43.4 M926.4,48.4 L930,52 L933.6,48.4" fill="none" stroke="#6c6c6c" stroke-width="1.3"/><line x1="567.5" y1="4" x2="567.5" y2="24" stroke="#444"/>
<rect x="583" y="5.6" width="16" height="16.8" fill="#a2a2a2"/><rect x="619.4" y="5.6" width="16" height="16.8" fill="#a2a2a2"/>
<g font-family="Liberation Sans, sans-serif" font-size="11" font-weight="bold" fill="#555"><text x="584.6" y="18.4">Br</text><text x="621.8" y="18.4">St</text></g>
<rect x="651" y="6.9" width="7.4" height="11" fill="#c4c4c4"/><rect x="660" y="6.9" width="8" height="4.6" fill="#c4c4c4"/><rect x="660" y="13.2" width="8" height="4.7" fill="#c4c4c4"/>
<path d="M677,10.6 L680.7,14.2 L684.4,10.6" fill="none" stroke="#d4d4d4" stroke-width="1.4"/>
<path d="M718.2,4.8 C711.8,5.6 706.7,11.8 706.2,17.5 C711.8,16.6 717.6,11.2 718.2,4.8Z M709.4,7.9 C705.5,8.4 702.5,10.8 700.8,13.8 C704.4,13.6 706.6,12 709.4,7.9Z M710.4,16.6 C710.2,18.6 709.4,20.4 708.8,21.9 C710.6,21 712.6,19.4 713.4,17Z" fill="#878787"/>
<circle cx="717.1" cy="16.8" r="6.2" fill="#535353"/><path d="M714.3,13.4 A4.2,4.2 0 1 0 719.9,13.4" fill="none" stroke="#c6c6c6" stroke-width="1.7"/><line x1="717.1" y1="11.2" x2="717.1" y2="17.4" stroke="#c6c6c6" stroke-width="1.8"/>
<path d="M387.4,75 L392.8,80.6 M392.8,75 L387.4,80.6" stroke="#f0f0f0" stroke-width="1.8"/></svg>
</body></html>
